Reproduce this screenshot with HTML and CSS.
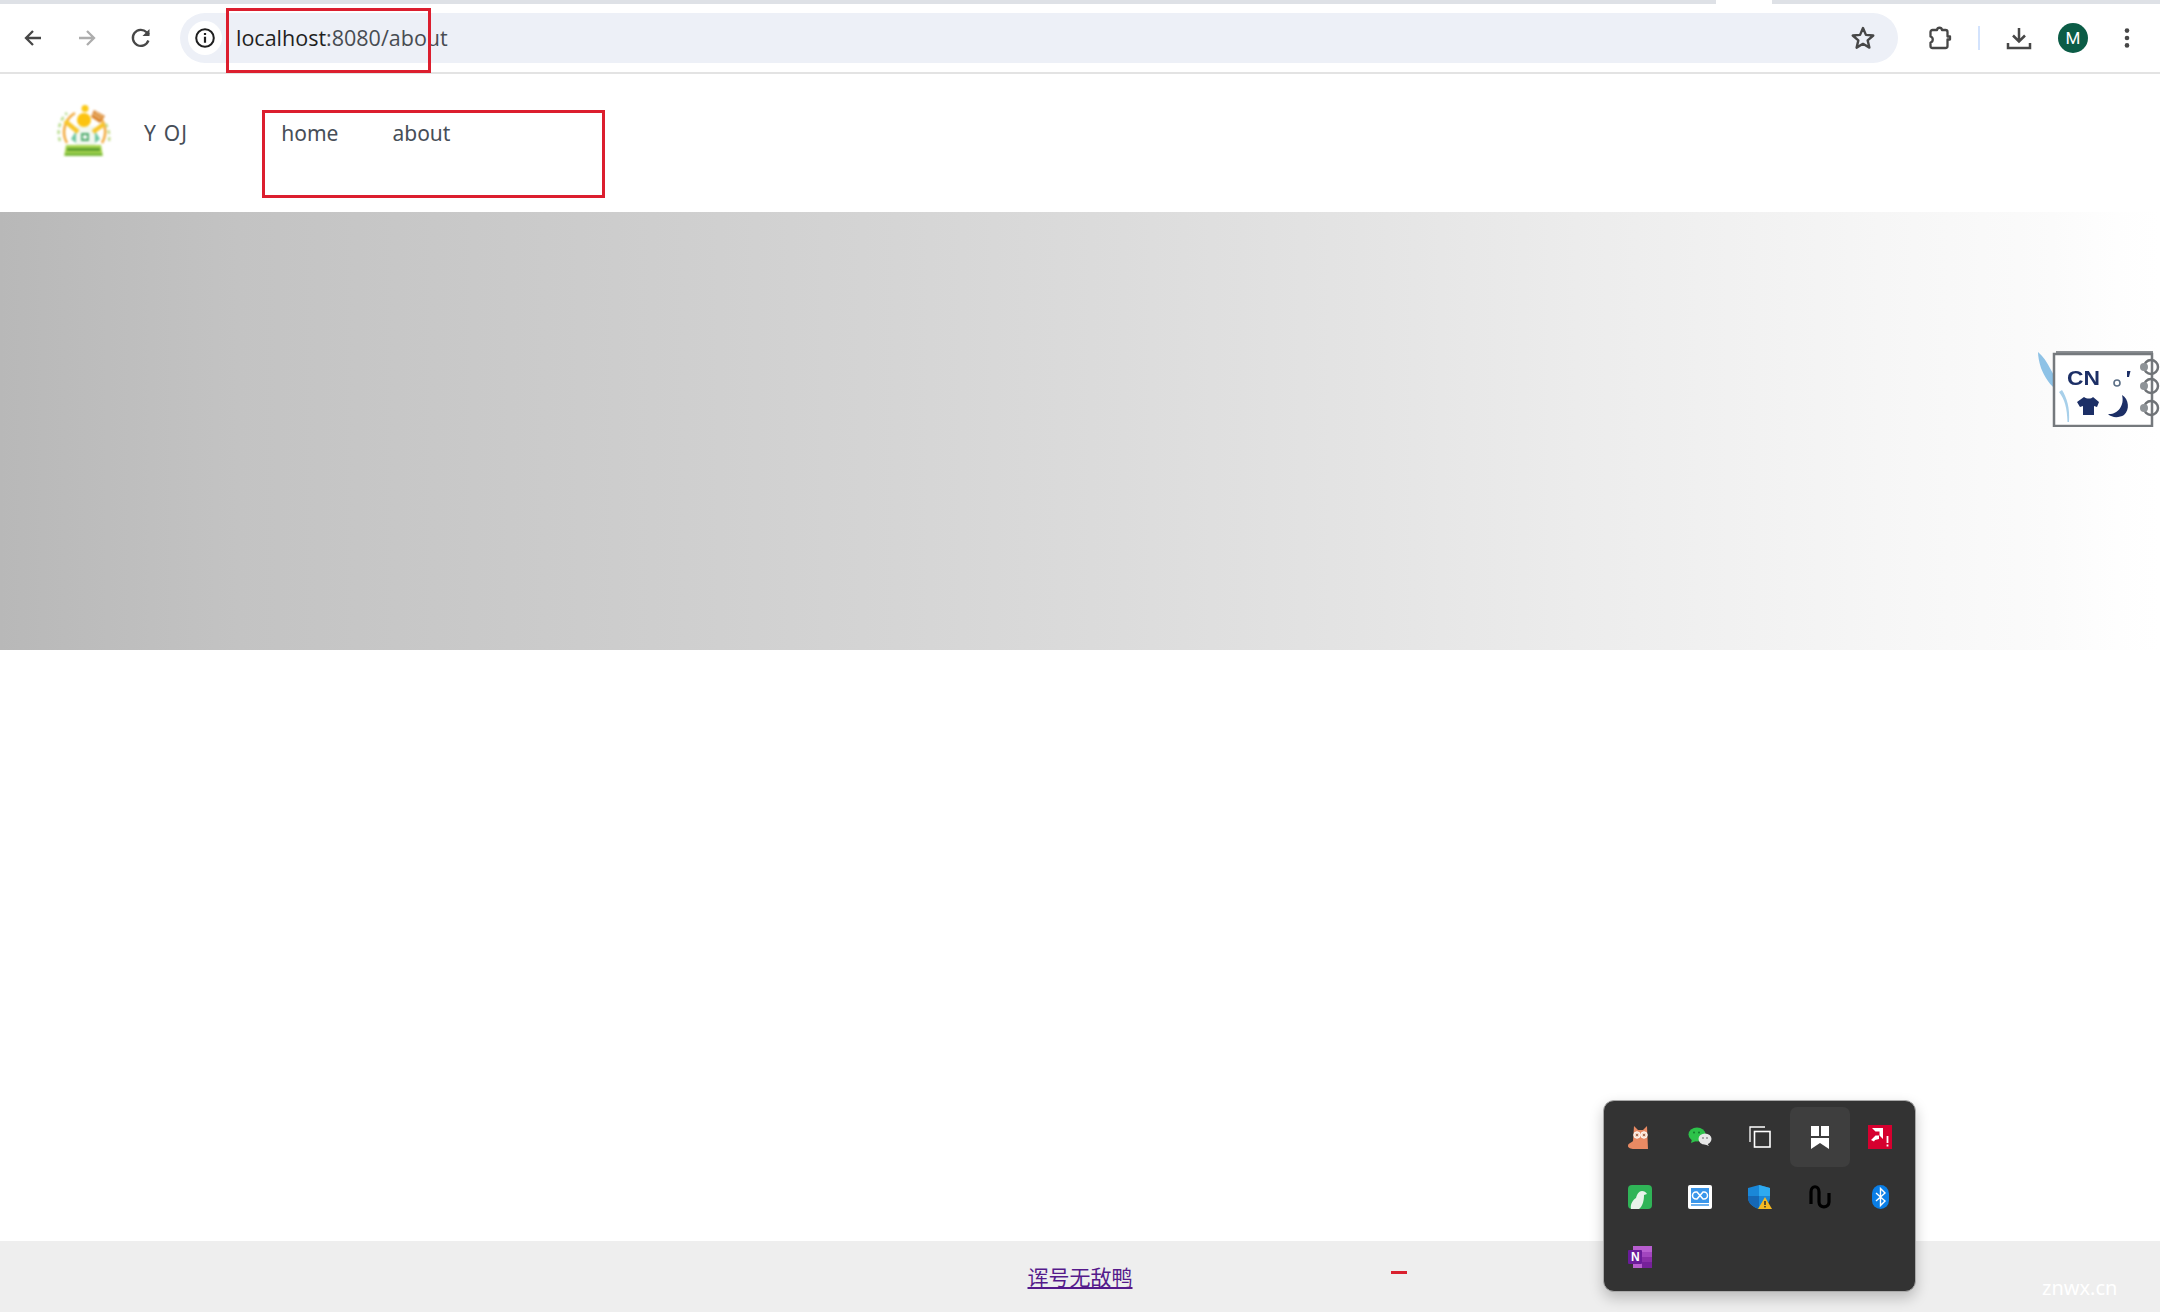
FILE: index.html
```html
<!DOCTYPE html>
<html lang="zh">
<head>
<meta charset="utf-8">
<title>Y OJ</title>
<link rel="stylesheet" href="styles.css">
</head>
<body>
<div class="page">
  <div class="tabstrip"><span class="tab-gap"></span></div>
  <div class="toolbar">
    <div class="tool-btn">
      <svg class="ico" viewBox="0 0 24 24"><path d="M20 12H5M12 5l-7 7 7 7" fill="none" stroke="#474747" stroke-width="2.3"/></svg>
    </div>
    <div class="tool-btn">
      <svg class="ico" viewBox="0 0 24 24"><path d="M4 12h15M12 5l7 7-7 7" fill="none" stroke="#adadad" stroke-width="2.3"/></svg>
    </div>
    <div class="tool-btn">
      <svg class="ico" viewBox="0 0 24 24"><path d="M19.4 14.5A8 8 0 1 1 17.6 6.3L20 8.6" fill="none" stroke="#474747" stroke-width="2.3"/><path d="M20.5 3v7h-7z" fill="#474747"/></svg>
    </div>
    <div class="omnibox">
      <span class="site-info">
        <svg class="ico-info" viewBox="0 0 24 24"><circle cx="12" cy="12" r="9.6" fill="none" stroke="#1f1f1f" stroke-width="2.2"/><path d="M12 10.6v6.6M12 6.6v2.2" stroke="#1f1f1f" stroke-width="2.4"/></svg>
      </span>
      <span class="url"><span class="url-host">localhost</span>:8080/about</span>
      <svg class="ico-star" viewBox="0 0 24 24"><path d="M12 2.8l2.7 6.3 6.8.6-5.2 4.5 1.6 6.7L12 17.4l-5.9 3.5 1.6-6.7-5.2-4.5 6.8-.6z" fill="none" stroke="#474747" stroke-width="2.2" stroke-linejoin="round"/></svg>
    </div>
    <div class="tool-btn">
      <svg class="ico-lg" viewBox="0 0 26 26"><path d="M3.500 7a2 2 0 0 1 2-2H10c.5-3 4.500-3 5 0h3.500a2 2 0 0 1 2 2v4.500h2.500v3h-2.500V21a2 2 0 0 1-2 2h-13a2 2 0 0 1-2-2v-3.500c3-.8 3-5.200 0-6z" fill="none" stroke="#474747" stroke-width="2.300" stroke-linejoin="round"/></svg>
    </div>
    <span class="tool-divider"></span>
    <div class="tool-btn">
      <svg class="ico-lg" viewBox="0 0 26 26"><path d="M13 3v13M7 10.500l6 6 6-6" fill="none" stroke="#474747" stroke-width="2.500"/><path d="M2 18v5h22v-5" fill="none" stroke="#474747" stroke-width="2.500"/></svg>
    </div>
    <div class="tool-btn"><span class="avatar">M</span></div>
    <div class="tool-btn">
      <svg class="ico" viewBox="0 0 24 24"><circle cx="12" cy="4.600" r="2.300" fill="#474747"/><circle cx="12" cy="12" r="2.300" fill="#474747"/><circle cx="12" cy="19.400" r="2.300" fill="#474747"/></svg>
    </div>
  </div>

  <header class="site-header">
    <svg class="logo" viewBox="0 0 55 52">
      <g fill="none" stroke-width="2.500">
        <path d="M10 38A22 22 0 0 1 18 8" stroke="#f2a93b"/>
        <path d="M45 38A22 22 0 0 0 38 8" stroke="#f2a93b"/>
        <path d="M3 36A27 27 0 0 1 10 8" stroke="#b9dc8f" stroke-dasharray="4 3"/>
        <path d="M52 36A27 27 0 0 0 47 16" stroke="#c5dc8f" stroke-dasharray="4 3"/>
      </g>
      <circle cx="28" cy="3.500" r="3.500" fill="#fbc916"/>
      <rect x="19" y="21" width="19" height="21" fill="#f2f8f0"/>
      <path d="M19 26l-5 8 5 4zM38 26l5 8-5 4z" fill="#6fc7a0"/>
      <path d="M8 16L21 27M47 19L36 27" stroke="#f8c62a" stroke-width="4.500" fill="none"/>
      <circle cx="27" cy="15" r="7" fill="#fcc310"/>
      <path d="M25 29h6v6h-6z" fill="none" stroke="#4aa86a" stroke-width="1.800"/>
      <path d="M37 5l11 6-5 7-9-6z" fill="#d9822b"/>
      <path d="M38 7l8 5M36 9l8 5" stroke="#f7e3b5" stroke-width="1"/>
      <path d="M9 40h35l2 11H7z" fill="#a8d64f"/>
      <rect x="10" y="43" width="33" height="3" fill="#5e9e2f"/>
      <rect x="8" y="48" width="37" height="3" fill="#7dbb3e"/>
    </svg>
    <span class="brand">Y OJ</span>
    <nav class="menu">
      <span class="menu-item">home</span>
      <span class="menu-item">about</span>
    </nav>
  </header>

  <section class="banner"></section>
  <main class="content"></main>

  <footer class="footer">
    <a class="footer-link" href="#">诨号无敌鸭</a>
    <span class="footer-dash"></span>
    <span class="watermark">znwx.cn</span>
  </footer>

  <span class="mark mark-url"></span>
  <span class="mark mark-menu"></span>

  <svg class="notebook" viewBox="0 0 122 77">
    <path d="M0 2c5 4 9 10 13 18l11 20C29 48 32 58 31 72l-1.500 0C29 58 27 50 21 42 12 36 6 26 3 18 1 12 0 6 0 2z" fill="#8ec2e6"/>
    <path d="M18 1h97v3H18z" fill="#8b8f93"/>
    <rect x="16" y="4" width="98" height="72" fill="#fff" stroke="#75797d" stroke-width="2.500"/>
    <path d="M24 40C29 48 32 58 31 72l-1.500 0C29 58 27 50 21 42z" fill="#a8d0ea"/>
    <text class="notebook-cn" x="29" y="35" textLength="33" lengthAdjust="spacingAndGlyphs">CN</text>
    <circle cx="79" cy="33" r="3" fill="none" stroke="#5c6f86" stroke-width="1.600"/>
    <path d="M89 21h3.500l-1.500 6h-2z" fill="#1c2f66"/>
    <path d="M39 52l7-5c3 2 7 2 9 0l6 5-2 5-3-1v9H45v-9l-3 1z" fill="#1c2f66"/>
    <path d="M84 45c7 4 8 15 2 20-5 3-12 3-16-1 9 1 17-8 14-19z" fill="#1c2f66"/>
    <g fill="none" stroke="#6f7377" stroke-width="2.500">
      <circle cx="113" cy="17" r="7"/><circle cx="113" cy="36" r="7"/><circle cx="113" cy="58" r="7"/>
    </g>
    <g fill="#8f9498"><circle cx="106" cy="17" r="4"/><circle cx="106" cy="36" r="4"/><circle cx="106" cy="58" r="4"/></g>
  </svg>

  <div class="tray">
    <div class="tray-cell">
      <svg class="tray-icon" viewBox="0 0 24 24"><path d="M6 1l4 4h5l4-4 1 23H6c-3 0-6-1-6-3 0-3 3-3 5-5z" fill="#e98a63"/><circle cx="9" cy="10" r="3.200" fill="#f6d7c4" stroke="#fff" stroke-width="1"/><circle cx="16" cy="10" r="3.200" fill="#f6d7c4" stroke="#fff" stroke-width="1"/><circle cx="9" cy="10" r="1" fill="#8b4a30"/><circle cx="16" cy="10" r="1" fill="#8b4a30"/></svg>
    </div>
    <div class="tray-cell">
      <svg class="tray-icon" viewBox="0 0 24 24"><ellipse cx="9" cy="9.500" rx="8.500" ry="7" fill="#2dc24a"/><path d="M4 14l-1 4 5-2z" fill="#2dc24a"/><ellipse cx="17" cy="14" rx="6.500" ry="5.500" fill="#e7e7e7"/><path d="M19 18l2 3-5-2z" fill="#e7e7e7"/><circle cx="6" cy="7.500" r="1" fill="#137a2c"/><circle cx="11" cy="7.500" r="1" fill="#137a2c"/><circle cx="15" cy="13" r=".9" fill="#888"/><circle cx="19" cy="13" r=".9" fill="#888"/></svg>
    </div>
    <div class="tray-cell">
      <svg class="tray-icon" viewBox="0 0 24 24"><path d="M17 2H2v15" fill="none" stroke="#fff" stroke-width="1.300"/><rect x="6.500" y="6.500" width="15.500" height="15.500" fill="none" stroke="#fff" stroke-width="1.600"/></svg>
    </div>
    <div class="tray-cell tray-cell-active">
      <svg class="tray-icon" viewBox="0 0 24 24"><path d="M3 1h8v10H3zM13 1h8v10h-8zM3 13h18v11l-9-6-9 6z" fill="#fff"/></svg>
    </div>
    <div class="tray-cell">
      <svg class="tray-icon" viewBox="0 0 24 24"><rect width="24" height="24" fill="#d6002f"/><path d="M4 3h11v11l-3.500-3.500V6.500H7.500zM3 15l4.500-4.500h3.500v3.500l-4 1-1 1.500z" fill="#fff"/><path d="M19.500 11v7M19.500 19.500v2" stroke="#fff" stroke-width="1.800"/></svg>
    </div>
    <div class="tray-cell">
      <svg class="tray-icon" viewBox="0 0 24 24"><rect width="24" height="24" rx="4" fill="#2fb457"/><path d="M3 24c-1-5 2-9 5-11 1-4 3-7 6-7 2 0 4 1 5 3l-3 1c0 5-1 11-5 14z" fill="#e8f3ea"/></svg>
    </div>
    <div class="tray-cell">
      <svg class="tray-icon" viewBox="0 0 24 24"><rect width="24" height="24" rx="2" fill="#fff"/><rect x="3" y="3" width="18" height="15" fill="#3a96ea"/><path d="M3 20h18" stroke="#3a96ea" stroke-width="1.500"/><path d="M9 7H8a3.500 3.500 0 0 0 0 7h1l6-7h1a3.500 3.500 0 0 1 0 7h-1z" fill="none" stroke="#fff" stroke-width="1.500"/></svg>
    </div>
    <div class="tray-cell">
      <svg class="tray-icon" viewBox="0 0 24 24"><path d="M11 0l11 3v10c0 5-5 9-11 11C5 22 0 18 0 13V3z" fill="#1a87d8"/><path d="M11 0l11 3v8H11z" fill="#2eaaf0"/><path d="M11 11H0v2c0 5 5 9 11 11z" fill="#1668b6"/><path d="M17 12l7 12H10z" fill="#f5b921"/><path d="M17 16v4M17 21v1.500" stroke="#2b2b2b" stroke-width="1.500"/></svg>
    </div>
    <div class="tray-cell">
      <svg class="tray-icon" viewBox="0 0 24 24"><path d="M3 19V7c0-7 8-7 8 0v10c0 7 10 6 10 0V8" fill="none" stroke="#000" stroke-width="3.200"/></svg>
    </div>
    <div class="tray-cell">
      <svg class="tray-icon" viewBox="0 0 24 24"><rect x="4" width="17" height="24" rx="8.500" fill="#0a7ee6"/><path d="M8 8l9 8-4.500 4.500V3.500L17 8l-9 8" fill="none" stroke="#fff" stroke-width="1.400"/></svg>
    </div>
    <div class="tray-cell">
      <svg class="tray-icon" viewBox="0 0 24 24"><rect x="5" y="1" width="19" height="22" fill="#b85ed0"/><rect x="14" y="7" width="10" height="5" fill="#a245bf"/><rect x="14" y="12" width="10" height="5" fill="#8a2ea8"/><rect x="14" y="17" width="10" height="6" fill="#76219a"/><rect y="5" width="14" height="14" rx="1" fill="#6a1b9a"/><text class="onenote-n" x="3" y="16">N</text></svg>
    </div>
  </div>
</div>
</body>
</html>
```
FILE: styles.css
```css
* { box-sizing: border-box; }
html, body { margin: 0; padding: 0; }
body { font-family: "Noto Sans", "Noto Sans CJK SC", sans-serif; background: #fff; }

.page {
  position: relative;
  width: 2160px;
  height: 1312px;
  overflow: hidden;
  display: flex;
  flex-direction: column;
}

.tabstrip { height: 4px; background: #dee1e6; display: flex; padding-left: 1716px; }
.tab-gap { width: 56px; height: 4px; background: #fff; }

.toolbar {
  height: 70px;
  display: flex;
  align-items: center;
  padding: 0 6px;
  background: #fff;
  border-bottom: 2px solid #e3e3e3;
  border-radius: 12px 12px 0 0;
}
.tool-btn { width: 54px; height: 50px; display: flex; align-items: center; justify-content: center; flex: none; }
.ico { width: 24px; height: 24px; }
.ico-lg { width: 26px; height: 26px; }

.omnibox {
  flex: 1;
  height: 50px;
  margin: 0 15px 0 12px;
  padding: 0 22px 0 8px;
  display: flex;
  align-items: center;
  background: #edf0f7;
  border-radius: 25px;
}
.site-info { width: 34px; height: 34px; border-radius: 50%; background: #fff; display: flex; align-items: center; justify-content: center; }
.ico-info { width: 22px; height: 22px; }
.url { flex: 1; margin-left: 14px; margin-top: -2px; font-family: "Open Sans", sans-serif; font-size: 21.500px; color: #474c52; }
.url-host { color: #1f1f1f; }
.ico-star { width: 26px; height: 26px; }

.tool-divider { width: 2px; height: 24px; margin: 0 12px 0 11px; background: #d3e3fd; flex: none; }
.avatar {
  width: 30px; height: 30px; border-radius: 50%;
  background: #0b5c46; color: #fff;
  display: flex; align-items: center; justify-content: center;
  font-family: "Roboto", sans-serif; font-size: 17px;
}

.site-header {
  height: 138px;
  display: flex;
  align-items: flex-start;
  padding: 31px 0 0 57px;
  background: #fff;
  color: #474e58;
  font-size: 21px;
  line-height: 56px;
}
.logo { width: 55px; height: 52px; flex: none; filter: blur(.8px); }
.brand { margin-left: 32px; letter-spacing: 1.200px; }
.menu { margin-left: 93px; display: flex; gap: 54px; }

.banner { height: 438px; background: linear-gradient(90deg, #b8b8b8 0%, #c3c3c3 11%, #c9c9c9 22%, #d5d5d5 41.500%, #dcdcdc 52%, #e4e4e4 63%, #ececec 73%, #f6f6f6 87%, #fbfbfb 95%, #fefefe 98%, #ffffff 100%); }
.content { flex: 1; background: #fff; }

.footer {
  position: relative;
  height: 71px;
  background: #eeeeee;
  text-align: center;
  padding-top: 18px;
  font-family: "Noto Sans CJK SC", "Noto Sans", sans-serif;
  font-size: 21px;
  line-height: 34px;
}
.footer-link { color: #551a8b; text-decoration: underline; }
.footer-dash { position: absolute; left: 1391px; top: 30px; width: 16px; height: 3px; background: #d9202e; }
.watermark { position: absolute; left: 2042px; top: 30px; font-family: "Noto Sans", sans-serif; font-size: 20px; line-height: 34px; color: #fff; }

.mark { position: absolute; border: 3px solid #dc1e2e; }
.mark-url { left: 226px; top: 8px; width: 205px; height: 65px; }
.mark-menu { left: 262px; top: 110px; width: 343px; height: 88px; }

.notebook { position: absolute; left: 2038px; top: 350px; width: 122px; height: 77px; filter: blur(.5px); }
.notebook-cn { font-family: "Liberation Sans", sans-serif; font-weight: 700; font-size: 21px; fill: #1c2f66; }

.tray {
  position: absolute;
  left: 1603px;
  top: 1100px;
  width: 313px;
  height: 192px;
  padding: 6px 6px;
  display: grid;
  grid-template-columns: repeat(5, 60px);
  grid-auto-rows: 60px;
  background: #333333;
  border: 1.500px solid #a9a9a9;
  border-radius: 11px;
  box-shadow: 0 6px 14px rgba(0, 0, 0, .22);
}
.tray-cell { display: flex; align-items: center; justify-content: center; border-radius: 7px; }
.tray-cell-active { background: #3e3e3e; }
.tray-icon { width: 24px; height: 24px; }
.onenote-n { font-family: "Liberation Sans", sans-serif; font-weight: 700; font-size: 12px; fill: #fff; }
```
